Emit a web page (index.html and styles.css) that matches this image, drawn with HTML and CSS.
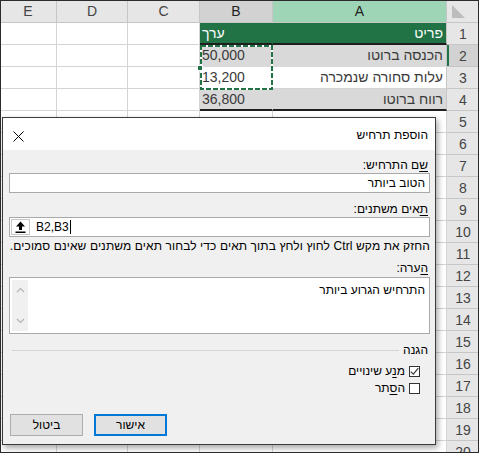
FILE: index.html
```html
<!DOCTYPE html>
<html lang="he">
<head>
<meta charset="utf-8">
<link rel="stylesheet" href="styles.css">
</head>
<body>
<div class="screen">
  <div class="sheet">
    <div class="row colhead">
      <div class="c ch">E</div><div class="c ch">D</div><div class="c ch">C</div><div class="c ch selb">B</div><div class="c ch sela">A</div>
      <div class="c corner"><span class="tri"></span></div>
    </div>
    <div class="row">
      <div class="c"></div><div class="c"></div><div class="c"></div>
      <div class="c b hdr tb">ערך</div><div class="c a hdr tb">פריט</div><div class="c rh">1</div>
    </div>
    <div class="row">
      <div class="c"></div><div class="c"></div><div class="c"></div>
      <div class="c b band">50,000</div><div class="c a band">הכנסה ברוטו</div><div class="c rh rsel">2</div>
    </div>
    <div class="row">
      <div class="c"></div><div class="c"></div><div class="c"></div>
      <div class="c b">13,200</div><div class="c a">עלות סחורה שנמכרה</div><div class="c rh">3</div>
    </div>
    <div class="row">
      <div class="c"></div><div class="c"></div><div class="c"></div>
      <div class="c b band tb">36,800</div><div class="c a band tb">רווח ברוטו</div><div class="c rh">4</div>
    </div>
    <div class="row"><div class="c"></div><div class="c"></div><div class="c"></div><div class="c"></div><div class="c"></div><div class="c rh">5</div></div>
    <div class="row"><div class="c"></div><div class="c"></div><div class="c"></div><div class="c"></div><div class="c"></div><div class="c rh">6</div></div>
    <div class="row"><div class="c"></div><div class="c"></div><div class="c"></div><div class="c"></div><div class="c"></div><div class="c rh">7</div></div>
    <div class="row"><div class="c"></div><div class="c"></div><div class="c"></div><div class="c"></div><div class="c"></div><div class="c rh">8</div></div>
    <div class="row"><div class="c"></div><div class="c"></div><div class="c"></div><div class="c"></div><div class="c"></div><div class="c rh">9</div></div>
    <div class="row"><div class="c"></div><div class="c"></div><div class="c"></div><div class="c"></div><div class="c"></div><div class="c rh">10</div></div>
    <div class="row"><div class="c"></div><div class="c"></div><div class="c"></div><div class="c"></div><div class="c"></div><div class="c rh">11</div></div>
    <div class="row"><div class="c"></div><div class="c"></div><div class="c"></div><div class="c"></div><div class="c"></div><div class="c rh">12</div></div>
    <div class="row"><div class="c"></div><div class="c"></div><div class="c"></div><div class="c"></div><div class="c"></div><div class="c rh">13</div></div>
    <div class="row"><div class="c"></div><div class="c"></div><div class="c"></div><div class="c"></div><div class="c"></div><div class="c rh">14</div></div>
    <div class="row"><div class="c"></div><div class="c"></div><div class="c"></div><div class="c"></div><div class="c"></div><div class="c rh">15</div></div>
    <div class="row"><div class="c"></div><div class="c"></div><div class="c"></div><div class="c"></div><div class="c"></div><div class="c rh">16</div></div>
    <div class="row"><div class="c"></div><div class="c"></div><div class="c"></div><div class="c"></div><div class="c"></div><div class="c rh">17</div></div>
    <div class="row"><div class="c"></div><div class="c"></div><div class="c"></div><div class="c"></div><div class="c"></div><div class="c rh">18</div></div>
    <div class="row"><div class="c"></div><div class="c"></div><div class="c"></div><div class="c"></div><div class="c"></div><div class="c rh">19</div></div>
    <div class="row"><div class="c"></div><div class="c"></div><div class="c"></div><div class="c"></div><div class="c"></div><div class="c rh">20</div></div>
  </div>

  <svg class="ants" width="73" height="45" viewBox="0 0 73 45">
    <rect x="1" y="1" width="71" height="43" fill="none" stroke="#ffffff" stroke-width="2"/>
    <rect x="1" y="1" width="71" height="43" fill="none" stroke="#217346" stroke-width="2" stroke-dasharray="5 2"/>
  </svg>
  <span class="handle"></span>

  <div class="dialog" dir="rtl">
    <div class="titlebar">
      <span class="title">הוספת תרחיש</span>
      <svg class="close" width="11" height="11" viewBox="0 0 11 11"><path d="M0.5 0.5 L10.5 10.5 M10.5 0.5 L0.5 10.5" stroke="#000" stroke-width="1"/></svg>
    </div>
    <div class="dbody">
      <div class="lbl l1"><u>ש</u>ם התרחיש:</div>
      <div class="field"><span class="ftext">הטוב ביותר</span></div>
      <div class="lbl l2"><u>ת</u>אים משתנים:</div>
      <div class="field ref" dir="ltr">
        <span class="refbtn">
          <svg width="11" height="12" viewBox="0 0 11 12"><path d="M5.5 0.5 L10 5.5 L7 5.5 L7 9 L4 9 L4 5.5 L1 5.5 Z" fill="#000"/><rect x="0.5" y="10.5" width="10" height="1.5" fill="#000"/></svg>
        </span>
        <span class="reftext">B2,B3</span><span class="caret"></span>
      </div>
      <div class="help">החזק את מקש Ctrl לחוץ ולחץ בתוך תאים כדי לבחור תאים משתנים שאינם סמוכים.</div>
      <div class="lbl l3"><u>ה</u>ערה:</div>
      <div class="memo">
        <div class="memotext">התרחיש הגרוע ביותר</div>
        <div class="vscroll">
          <svg width="9" height="6" viewBox="0 0 9 6"><path d="M1 5 L4.5 1.5 L8 5" fill="none" stroke="#b4b4b4" stroke-width="1.2"/></svg>
          <svg width="9" height="6" viewBox="0 0 9 6"><path d="M1 1 L4.5 4.5 L8 1" fill="none" stroke="#b4b4b4" stroke-width="1.2"/></svg>
        </div>
      </div>
      <div class="group"><span class="gtitle">הגנה</span><span class="rule"></span></div>
      <div class="check c1">
        <span class="box"><svg width="9" height="9" viewBox="0 0 9 9"><path d="M0.8 4.6 L3.3 7.2 L8.3 1.2" fill="none" stroke="#333" stroke-width="1.1"/></svg></span>
        <span class="ctext">מ<u>נ</u>ע שינויים</span>
      </div>
      <div class="check c2">
        <span class="box"></span>
        <span class="ctext">ה<u>ס</u>תר</span>
      </div>
      <div class="buttons">
        <div class="btn ok">אישור</div>
        <div class="btn">ביטול</div>
      </div>
    </div>
  </div>
</div>
</body>
</html>
```

FILE: styles.css
```css
* { box-sizing: border-box; margin: 0; padding: 0; }
html, body { width: 479px; height: 453px; overflow: hidden; background: #fff; }
body { font-family: "Liberation Sans", Arial, sans-serif; color: #000; }

.screen { position: relative; width: 479px; height: 453px; overflow: hidden; }
.screen::after { content: ""; position: absolute; inset: 0; border: 1px solid #2b2b2b; pointer-events: none; }

.sheet { display: flex; flex-direction: column; }
.row { display: grid; grid-template-columns: 57px 71px 72px 73px 174px 32px; height: 22px; }
.row.colhead { height: 23px; }

.c {
  border-right: 1px solid #d4d4d4;
  border-bottom: 1px solid #d4d4d4;
  font-size: 14px;
  line-height: 21px;
  white-space: nowrap;
  overflow: hidden;
  color: #3a3a3a;
}
.ch {
  background: #e6e6e6;
  border-right-color: #c6c6c6;
  border-bottom-color: #c6c6c6;
  text-align: center;
  color: #444;
  font-size: 14px;
  line-height: 22px;
}
.ch.selb { background: #d2d2d2; color: #222; }
.ch.sela { background: #9fd5b7; color: #222; }
.corner { background: #e6e6e6; border-right: none; border-bottom-color: #c6c6c6; position: relative; }
.tri {
  display: block;
  margin: 5px 0 0 5px;
  width: 0; height: 0;
  border-left: 13px solid #bdbdbd;
  border-top: 13px solid transparent;
}

.a { direction: rtl; text-align: right; padding-right: 3px; border-right-color: #c6c6c6; }
.b { text-align: left; padding-left: 2px; }
.hdr { background: #217346; color: #fff; border-right-color: #217346; border-bottom-color: #217346; }
.band { background: #d9d9d9; border-right-color: #d9d9d9; border-bottom-color: #d9d9d9; }
.tb { border-bottom: 2px solid #1e1e1e; }
.a.hdr { border-right-color: #c6c6c6; }
.a.band { border-right-color: #c6c6c6; }

.rh {
  background: #e6e6e6;
  border-right: none;
  border-bottom-color: #c6c6c6;
  text-align: center;
  color: #444;
  font-size: 14px;
  line-height: 22px;
}
.rh.rsel { background: #d2d2d2; box-shadow: inset 2px 0 0 #217346; }

.ants { position: absolute; left: 200px; top: 45px; }
.handle {
  position: absolute; left: 197px; top: 65px;
  width: 6px; height: 6px;
  background: #217346; border: 1px solid #fff;
}

/* dialog */
.dialog {
  position: absolute;
  left: 2px; top: 117px;
  width: 434px; height: 328px;
  border: 1px solid #3a3a3a;
  background: #f0f0f0;
  box-shadow: 2px 3px 6px rgba(0,0,0,0.35);
  display: flex; flex-direction: column;
  font-size: 12px;
}
.titlebar {
  height: 32px;
  background: #fff;
  display: flex; align-items: center; justify-content: space-between;
  padding: 2px 7px 0 10px;
}
.title { font-size: 12px; color: #000; }
.close { display: block; margin-top: 3px; }

.dbody {
  flex: 1;
  display: flex; flex-direction: column;
  padding: 0 5px 0 6px;
}
.lbl { line-height: 16px; padding-right: 2px; }
.lbl u, .ctext u { text-underline-offset: 2px; }
.l1 { margin-top: 7px; }
.l2 { margin-top: 8px; }
.l3 { margin-top: 6px; }

.field {
  height: 20px;
  background: #fff;
  border: 1px solid #a9a9a9;
  display: flex; align-items: center;
  padding: 0 4px;
  line-height: 18px;
}
.ref { padding: 0 0 0 1px; }
.refbtn {
  width: 19px; height: 16px;
  border: 1px solid #c8c8c8;
  background: #fff;
  display: flex; align-items: center; justify-content: center;
}
.reftext { margin-left: 6px; font-size: 12px; }
.caret { width: 1px; height: 14px; background: #000; margin-left: 1px; }

.help { margin-top: 1px; line-height: 16px; white-space: nowrap; letter-spacing: 0.1px; }

.memo {
  margin-top: 1px;
  height: 57px;
  background: #fff;
  border: 1px solid #a9a9a9;
  display: flex;
  padding: 2px;
}
.memotext { flex: 1; padding: 2px 2px 0 0; line-height: 16px; }
.vscroll {
  width: 16px;
  background: #f0f0f0;
  display: flex; flex-direction: column; justify-content: space-between; align-items: center;
  padding: 7px 0 7px;
}
.vscroll svg { display: block; }

.group { margin-top: 8px; display: flex; align-items: center; line-height: 16px; padding-right: 2px; }
.gtitle { padding-left: 4px; }
.rule { flex: 1; height: 1px; background: #d5d5d5; margin-left: 3px; }

.check { display: flex; align-items: center; line-height: 16px; padding-right: 10px; }
.c1 { margin-top: 5px; }
.c2 { margin-top: 1px; }
.box {
  width: 11px; height: 11px;
  border: 1px solid #333;
  background: #fff;
  margin-left: 4px;
  display: flex; align-items: center; justify-content: center;
}
.box svg { display: block; }

.buttons {
  margin-top: 18px;
  display: flex; justify-content: flex-end; gap: 11px;
  padding-left: 1px;
}
.btn {
  width: 73px; height: 22px;
  background: #e1e1e1;
  border: 1px solid #adadad;
  display: flex; align-items: center; justify-content: center;
  font-size: 12px;
}
.btn.ok { border: 2px solid #0078d7; }
```
